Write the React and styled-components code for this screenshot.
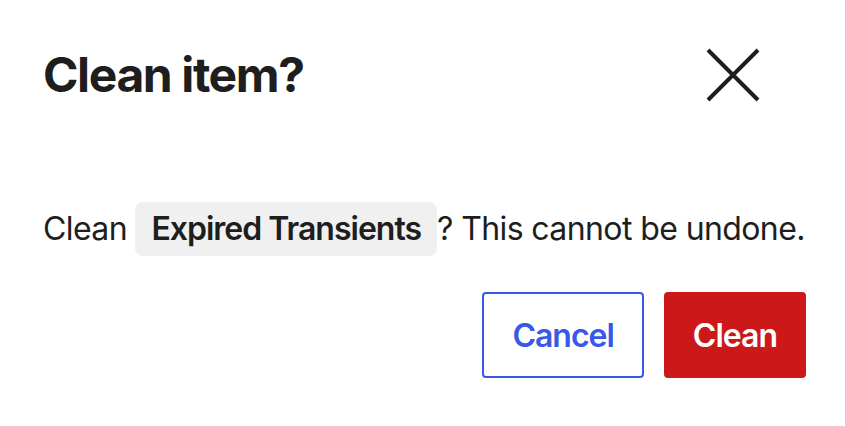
import React from "react";
import styled, { createGlobalStyle } from "styled-components";

const Global = createGlobalStyle`
  html, body { margin: 0; padding: 0; background: #fff; }
  body { font-family: Inter, "Noto Sans", sans-serif; color: #1e1e1e; }
`;

const Modal = styled.div`
  width: 845px;
  height: 426px;
  box-sizing: border-box;
  padding: 27px 39px 48px 43px;
  display: flex;
  flex-direction: column;
  background: #fff;
`;

const Header = styled.div`
  height: 96px;
  display: flex;
  align-items: center;
  justify-content: space-between;
`;

const Title = styled.h1`
  margin: 0;
  font-size: 48px;
  line-height: 48px;
  font-weight: 700;
  letter-spacing: -1.4px;
  color: #1e1e1e;
`;

const CloseButton = styled.button`
  width: 96px;
  height: 96px;
  margin-right: 25px;
  padding: 0;
  border: 0;
  background: transparent;
  display: flex;
  align-items: center;
  justify-content: center;
  cursor: pointer;
`;

const Body = styled.p`
  margin: 79px 0 0;
  font-size: 32px;
  line-height: 54px;
  letter-spacing: -0.6px;
  white-space: nowrap;
  color: #1e1e1e;
`;

const Code = styled.code`
  display: inline-block;
  font-family: Inter, "Noto Sans", sans-serif;
  font-weight: 600;
  font-size: 32px;
  line-height: 38px;
  letter-spacing: -1px;
  padding: 8px 16px;
  background: #f0f0f0;
  border-radius: 8px;
`;

const Actions = styled.div`
  margin-top: auto;
  display: flex;
  justify-content: flex-end;
  gap: 20px;
`;

const Button = styled.button`
  height: 86px;
  padding: 0 ${(p) => (p.$primary ? "29px" : "28px")};
  box-sizing: border-box;
  font-family: Inter, "Noto Sans", sans-serif;
  font-size: 32px;
  font-weight: 600;
  letter-spacing: -1px;
  border-radius: 4px;
  cursor: pointer;
  color: ${(p) => (p.$primary ? "#fff" : "#3858e9")};
  background: ${(p) => (p.$primary ? "#cc1818" : "#fff")};
  border: ${(p) => (p.$primary ? "0" : "2px solid #3858e9")};
`;

export default function App() {
  return (
    <>
      <Global />
      <Modal>
        <Header>
          <Title>Clean item?</Title>
          <CloseButton aria-label="Close">
            <svg width="56" height="56" viewBox="0 0 56 56">
              <path
                d="M3 3 L53 53 M53 3 L3 53"
                stroke="#1e1e1e"
                strokeWidth="4"
                fill="none"
              />
            </svg>
          </CloseButton>
        </Header>
        <Body>
          Clean <Code>Expired Transients</Code>? This cannot be undone.
        </Body>
        <Actions>
          <Button>Cancel</Button>
          <Button $primary>Clean</Button>
        </Actions>
      </Modal>
    </>
  );
}
